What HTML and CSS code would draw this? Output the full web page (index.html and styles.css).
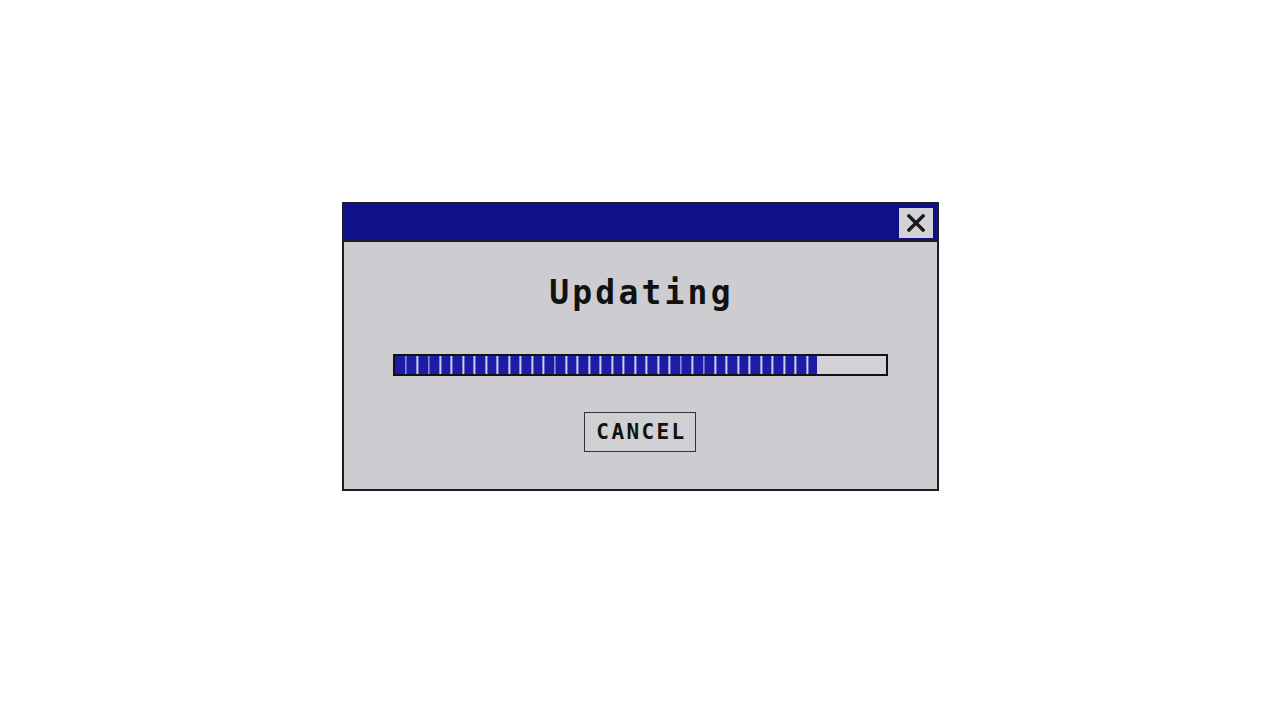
FILE: index.html
```html
<!DOCTYPE html>
<html lang="en">
<head>
  <meta charset="UTF-8">
  <title>Updating</title>
  <link rel="stylesheet" href="styles.css">
</head>
<body>
  <div class="window">
    <div class="titlebar">
      <button class="close" aria-label="Close">
        <svg width="18" height="18" viewBox="0 0 18 18">
          <path d="M2 2 L16 16 M16 2 L2 16" stroke="#1a1a1a" stroke-width="3.4" stroke-linecap="square"/>
        </svg>
      </button>
    </div>
    <div class="content">
      <h2 class="heading">Updating</h2>
      <div class="progress">
        <div class="progress-fill" style="width: 86%"></div>
      </div>
      <button class="cancel">CANCEL</button>
    </div>
  </div>
</body>
</html>
```
FILE: styles.css
```css
body {
  margin: 0;
  background: #fff;
  font-family: "DejaVu Sans Mono", "Liberation Mono", monospace;
}

.window {
  box-sizing: border-box;
  width: 597px;
  margin: 202px auto 0;
  border: 2px solid #1e1e22;
  background: #cdcdd1;
}

.titlebar {
  box-sizing: border-box;
  height: 38px;
  background: #10108a;
  border-bottom: 2px solid #1e1e22;
  display: flex;
  justify-content: flex-end;
  padding: 4px 4px 0 0;
}

.close {
  width: 34px;
  height: 30px;
  padding: 0;
  border: none;
  background: #d3d3d7;
  display: flex;
  align-items: center;
  justify-content: center;
}

.content {
  height: 247px;
  box-sizing: border-box;
  padding-top: 35px;
  display: flex;
  flex-direction: column;
  align-items: center;
}

.heading {
  margin: 0;
  font-size: 33px;
  line-height: 32px;
  font-weight: bold;
  letter-spacing: 3.2px;
  padding-left: 3px;
  color: #111;
}

.progress {
  box-sizing: border-box;
  width: 495px;
  height: 22px;
  margin-top: 45px;
  border: 2px solid #111;
  background: #d2d2d6;
}

/* blue blocks split by thin light gaps */
.progress-fill {
  height: 100%;
  background: repeating-linear-gradient(90deg,
    #1c1ca6 0, #1c1ca6 9.6px,
    #cfcfe6 9.6px, #cfcfe6 11.46px);
  background-position: 0.4px 0;
}

.cancel {
  box-sizing: border-box;
  width: 112px;
  height: 40px;
  margin-top: 36px;
  border: 1.5px solid #333;
  background: #d0d0d4;
  font-family: "DejaVu Sans Mono", "Liberation Mono", monospace;
  font-weight: bold;
  font-size: 21px;
  letter-spacing: 2.4px;
  padding: 0 0 0 3px;
  color: #111;
}
```
